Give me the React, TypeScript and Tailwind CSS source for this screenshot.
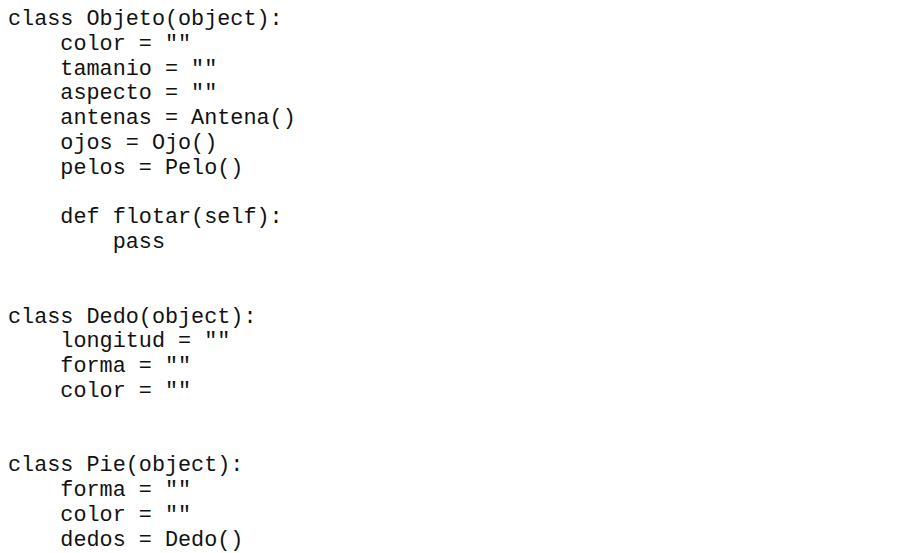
export default function App() {
  const code = `class Objeto(object):
    color = ""
    tamanio = ""
    aspecto = ""
    antenas = Antena()
    ojos = Ojo()
    pelos = Pelo()

    def flotar(self):
        pass


class Dedo(object):
    longitud = ""
    forma = ""
    color = ""


class Pie(object):
    forma = ""
    color = ""
    dedos = Dedo()`;
  return (
    <div className="w-[923px] h-[553px] bg-white overflow-hidden">
      <pre
        className="m-0 pl-[8px] pt-[8px] text-[21.8px] leading-[24.8px] text-[#111]"
        style={{ fontFamily: '"Liberation Mono", monospace' }}
      >
        {code}
      </pre>
    </div>
  );
}
